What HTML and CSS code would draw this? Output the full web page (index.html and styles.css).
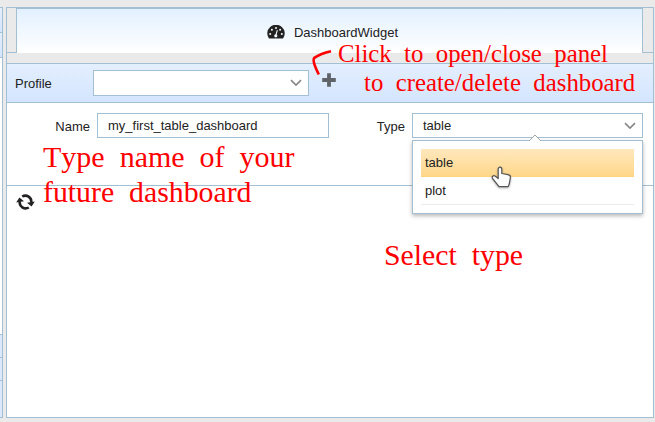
FILE: index.html
```html
<!DOCTYPE html>
<html lang="en">
<head>
<meta charset="utf-8">
<title>DashboardWidget</title>
<link rel="stylesheet" href="styles.css">
</head>
<body>
<div class="app">
  <aside class="side">
    <div class="side-head"></div>
    <div class="side-head"></div>
    <div class="side-body"></div>
    <div class="side-foot"></div>
    <div class="side-foot"></div>
    <div class="side-foot last"></div>
  </aside>
  <main class="panel">
    <header class="tabs">
      <div class="tab-edge"></div>
      <div class="tab">
        <svg class="gauge" width="18" height="14" viewBox="0 0 18 14"><path d="M2 13.6A8.7 8.7 0 1 1 16 13.6Z" fill="#222"/><g fill="#f5faff"><circle cx="3.2" cy="9" r="1"/><circle cx="4.9" cy="4.8" r="1"/><circle cx="9" cy="2.9" r="1"/><circle cx="13.1" cy="4.8" r="1"/><circle cx="14.8" cy="9" r="1"/><circle cx="8.8" cy="10.8" r="1.6"/></g><path d="M8.8 10.5L10.3 5.2" stroke="#f5faff" stroke-width="1.1"/></svg>
        <span>DashboardWidget</span>
      </div>
      <div class="tab-edge right"></div>
    </header>
    <div class="toolbar">
      <span class="profile-label">Profile</span>
      <div class="field profile"><span></span><svg class="chevron" width="12" height="8" viewBox="0 0 12 8"><path d="M1 1.2L6 6L11 1.2"/></svg></div>
      <svg class="plus" width="14" height="14" viewBox="0 0 14 14"><path d="M5.1 .2h3.8v4.9h4.9v3.8H8.9v4.9H5.1V8.9H.2V5.1h4.9Z" fill="#606468"/></svg>
    </div>
    <div class="form">
      <span class="name-label">Name</span>
      <div class="field name"><span>my_first_table_dashboard</span></div>
      <span class="type-label">Type</span>
      <div class="field type"><span>table</span><svg class="chevron" width="12" height="8" viewBox="0 0 12 8"><path d="M1 1.2L6 6L11 1.2"/></svg>
        <div class="menu">
          <svg class="notch" width="12" height="7" viewBox="0 0 12 7"><path d="M0 7L6 1L12 7" fill="#fff" stroke="#a0a8ae"/></svg>
          <div class="option selected">table</div>
          <div class="option">plot</div>
        </div>
      </div>
    </div>
    <div class="content">
      <svg class="refresh" width="19" height="16" viewBox="0 0 19 16"><g fill="none" stroke="#222" stroke-width="2.6"><path d="M6.2 2.5A6 6 0 0 1 15.2 8.6"/><path d="M12.8 13.5A6 6 0 0 1 3.8 7.4"/></g><path d="M11 8.8L18.8 7.6L15.6 12.4ZM8 7.2L.2 8.4L3.4 3.6Z" fill="#222"/></svg>
    </div>
  </main>
</div>
<div class="note small click-one">Click to open/close panel</div>
<div class="note small click-two">to create/delete dashboard</div>
<div class="note name-one">Type name of your</div>
<div class="note name-two">future dashboard</div>
<div class="note select-note">Select type</div>
<svg class="stroke" width="24" height="30" viewBox="0 0 24 30"><path d="M20 3.2C15 4.3 8 6.6 3.3 9.8C1.4 12 3.4 18 7.8 26.5" fill="none" stroke="#f00" stroke-width="2.7"/></svg>
<svg class="cursor" width="24" height="25" viewBox="0 0 24 25"><path d="M8.2 13.5V4.2C8.2 1.3 11.8 1.3 11.8 4.2V8.5L18 9.6C20 10 20.6 10.8 20.4 12.4L19.3 18.8L18.2 21.6H9L2.7 13.6C1.2 11.5 3.3 10 5.4 11.2Z" fill="#fcfcfc" stroke="#555" stroke-width="1.2" stroke-linejoin="round"/></svg>
</body>
</html>
```
FILE: styles.css
```css
* { box-sizing: border-box; }
body {
  margin: 0;
  width: 655px;
  height: 422px;
  overflow: hidden;
  position: relative;
  background: #eaeaea;
  color: #222;
  font: 13px/16px "Liberation Sans", Arial, sans-serif;
}
svg { display: block; flex: none; }
.app { display: flex; gap: 3px; height: 418px; padding-top: 7px; }
.side {
  width: 3px;
  display: flex;
  flex-direction: column;
  border: solid #a3bfd4;
  border-width: 1px 1px 1px 0;
}
.side-head { height: 25px; border-bottom: 1px solid #a3bfd4; background: linear-gradient(#e4effe, #d3e5ff); }
.side-body { flex: 1; background: #fff; }
.side-foot { height: 23px; border-top: 1px solid #a3bfd4; background: #dae9fd; }
.side-foot.last { height: 37px; }
.panel {
  width: 648px;
  display: flex;
  flex-direction: column;
  border: 1px solid #a3bfd4;
  background: #fff;
}
.tabs { display: flex; height: 55px; padding-bottom: 10px; background: #eaeaea; }
.tab-edge { width: 10px; border: solid #a3bfd4; border-width: 0 1px 1px 0; }
.tab-edge.right { width: 11px; border-width: 0 0 1px 1px; }
.tab {
  flex: 1;
  display: flex;
  justify-content: center;
  gap: 9px;
  padding: 16px 0 0 6px;
  border-top: 1px solid #a3bfd4;
  background: linear-gradient(#e2f0ff, #fff);
}
.tab span { display: block; }
.toolbar {
  height: 40px;
  display: flex;
  align-items: flex-start;
  padding: 6px 0 0 8px;
  border: solid #a3bfd4;
  border-width: 1px 0;
  background: linear-gradient(#e4effe, #d3e5ff);
}
.profile-label { width: 78px; padding-top: 6px; }
.field {
  position: relative;
  display: flex;
  align-items: center;
  justify-content: space-between;
  height: 25px;
  padding: 0 6px 0 10px;
  border: 1px solid #a3bfd4;
  background: #fff;
}
.chevron path { fill: none; stroke: #888; stroke-width: 1.7; }
.profile { width: 216px; height: 26px; }
.plus { margin: 3px 0 0 13px; }
.form { height: 83px; display: flex; align-items: flex-start; padding-top: 10px; border-bottom: 1px solid #a3bfd4; }
.name-label { width: 90px; padding: 6px 7px 0 0; text-align: right; }
.name { width: 232px; }
.type-label { width: 83px; padding: 6px 7px 0 0; text-align: right; }
.type { width: 231px; }
.menu {
  position: absolute;
  z-index: 2;
  top: 26px;
  left: -1px;
  width: 231px;
  height: 74px;
  padding: 8px;
  border: 1px solid #a3bfd4;
  background: #fff;
  box-shadow: 0 2px 4px rgba(0, 0, 0, .28);
}
.notch { position: absolute; top: -7px; left: 116px; }
.option { height: 28px; padding: 6px 4px; border-bottom: 1px solid #ebebeb; }
.option.selected { border-color: #ffd57f; background: linear-gradient(#ffe8bd, #ffd78a); }
.content { flex: 1; padding: 8px 0 0 9px; }
.note {
  position: absolute;
  z-index: 4;
  color: #f00;
  font: 29.8px/34px "Liberation Serif", "Times New Roman", serif;
  font-kerning: none;
  word-spacing: .25em;
  white-space: nowrap;
}
.small { font-size: 24.8px; line-height: 28px; }
.click-one { left: 338px; top: 40px; }
.click-two { left: 364px; top: 69px; }
.name-one { left: 43px; top: 140px; font-size: 30px; }
.name-two { left: 43px; top: 175px; }
.select-note { left: 384px; top: 238px; }
.stroke { position: absolute; z-index: 4; left: 311px; top: 48px; }
.cursor { position: absolute; z-index: 5; left: 490px; top: 165px; filter: drop-shadow(0 1px 1px rgba(0, 0, 0, .3)); }
```
